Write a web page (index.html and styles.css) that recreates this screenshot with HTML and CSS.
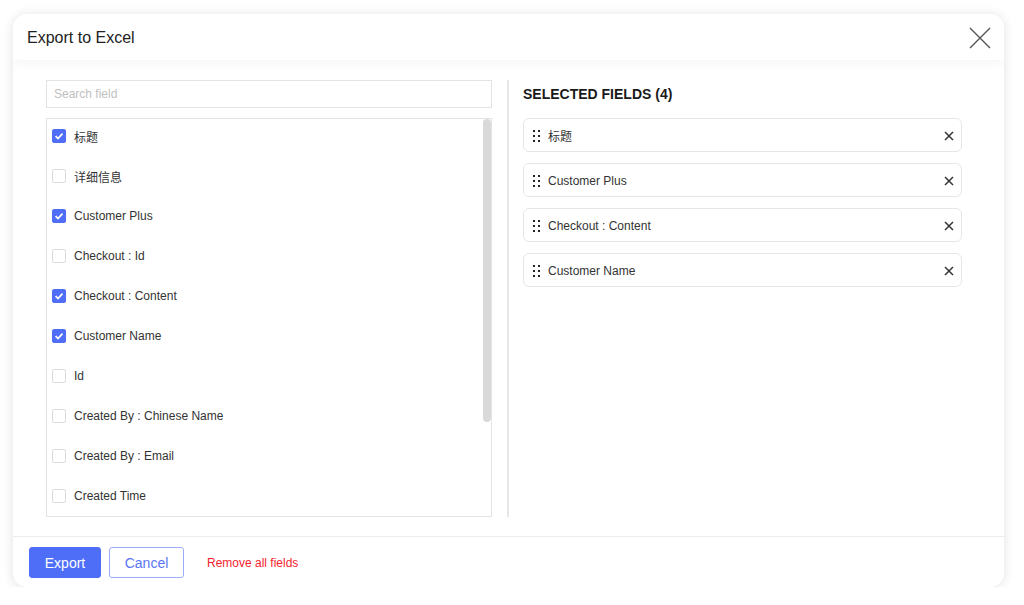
FILE: index.html
```html
<!DOCTYPE html>
<html>
<head>
<meta charset="utf-8">
<link rel="stylesheet" href="styles.css">
</head>
<body>
<div class="modal">
  <div class="header">
    <div class="title">Export to Excel</div>
    <svg class="close" width="22" height="22" viewBox="0 0 22 22"><path d="M1 1 L21 21 M21 1 L1 21" stroke="#555" stroke-width="1.4" fill="none"/></svg>
  </div>
  <div class="body">
    <div class="left">
      <div class="search">Search field</div>
      <div class="list">
        <div class="row"><span class="cb on"><svg width="10" height="10" viewBox="0 0 10 10"><path d="M1.6 5.2 L4 7.5 L8.5 2.6" stroke="#fff" stroke-width="1.8" fill="none"/></svg></span>标题</div>
        <div class="row"><span class="cb"></span>详细信息</div>
        <div class="row"><span class="cb on"><svg width="10" height="10" viewBox="0 0 10 10"><path d="M1.6 5.2 L4 7.5 L8.5 2.6" stroke="#fff" stroke-width="1.8" fill="none"/></svg></span>Customer Plus</div>
        <div class="row"><span class="cb"></span>Checkout : Id</div>
        <div class="row"><span class="cb on"><svg width="10" height="10" viewBox="0 0 10 10"><path d="M1.6 5.2 L4 7.5 L8.5 2.6" stroke="#fff" stroke-width="1.8" fill="none"/></svg></span>Checkout : Content</div>
        <div class="row"><span class="cb on"><svg width="10" height="10" viewBox="0 0 10 10"><path d="M1.6 5.2 L4 7.5 L8.5 2.6" stroke="#fff" stroke-width="1.8" fill="none"/></svg></span>Customer Name</div>
        <div class="row"><span class="cb"></span>Id</div>
        <div class="row"><span class="cb"></span>Created By : Chinese Name</div>
        <div class="row"><span class="cb"></span>Created By : Email</div>
        <div class="row"><span class="cb"></span>Created Time</div>
        <div class="thumb"></div>
      </div>
    </div>
    <div class="divider"></div>
    <div class="right">
      <div class="sel-title">SELECTED FIELDS (4)</div>
      <div class="sel-list">
        <div class="item"><span class="grip"><i></i><i></i><i></i><i></i><i></i><i></i></span><span class="name">标题</span><svg class="x" width="10" height="10" viewBox="0 0 10 10"><path d="M1 1 L9 9 M9 1 L1 9" stroke="#333" stroke-width="1.5"/></svg></div>
        <div class="item"><span class="grip"><i></i><i></i><i></i><i></i><i></i><i></i></span><span class="name">Customer Plus</span><svg class="x" width="10" height="10" viewBox="0 0 10 10"><path d="M1 1 L9 9 M9 1 L1 9" stroke="#333" stroke-width="1.5"/></svg></div>
        <div class="item"><span class="grip"><i></i><i></i><i></i><i></i><i></i><i></i></span><span class="name">Checkout : Content</span><svg class="x" width="10" height="10" viewBox="0 0 10 10"><path d="M1 1 L9 9 M9 1 L1 9" stroke="#333" stroke-width="1.5"/></svg></div>
        <div class="item"><span class="grip"><i></i><i></i><i></i><i></i><i></i><i></i></span><span class="name">Customer Name</span><svg class="x" width="10" height="10" viewBox="0 0 10 10"><path d="M1 1 L9 9 M9 1 L1 9" stroke="#333" stroke-width="1.5"/></svg></div>
      </div>
    </div>
  </div>
  <div class="footer">
    <button class="btn primary">Export</button>
    <button class="btn ghost">Cancel</button>
    <span class="remove">Remove all fields</span>
  </div>
</div>
</body>
</html>
```
FILE: styles.css
```css
* { box-sizing: border-box; }
html, body { margin: 0; padding: 0; background: #fff; }
body {
  font-family: "Liberation Sans", Arial, "Noto Sans CJK SC", sans-serif;
  color: #333;
  padding: 14px 0 0 13px;
}
.modal {
  width: 991px;
  height: 573px;
  background: #fff;
  border-radius: 14px;
  box-shadow: 0 1px 12px rgba(0, 0, 0, 0.12);
  display: flex;
  flex-direction: column;
  overflow: hidden;
}
.header {
  height: 46px;
  flex: none;
  display: flex;
  align-items: center;
  justify-content: space-between;
  padding: 0 13px 0 14px;
  box-shadow: 0 3px 10px rgba(0, 0, 0, 0.045);
  position: relative;
  z-index: 1;
}
.title {
  font-size: 16px;
  color: #222;
  padding-top: 2px;
}
.close { display: block; margin-top: 1px; }
.body {
  flex: 1;
  display: flex;
  padding: 20px 42px 19px 33px;
  min-height: 0;
}
.left {
  width: 446px;
  display: flex;
  flex-direction: column;
  gap: 10px;
}
.search {
  height: 28px;
  border: 1px solid #e3e3e3;
  font-size: 12px;
  color: #bfbfbf;
  padding: 0 7px;
  display: flex;
  align-items: center;
}
.list {
  flex: 1;
  min-height: 0;
  border: 1px solid #e3e3e3;
  overflow: hidden;
  padding: 0 0 0 5px;
  position: relative;
}
.thumb {
  position: absolute;
  top: 0;
  right: 0;
  width: 8px;
  height: 303px;
  background: #d9d9d9;
  border-radius: 4px;
}
.row {
  height: 40px;
  display: flex;
  align-items: center;
  gap: 8px;
  font-size: 12px;
  color: #333;
  padding-bottom: 6px;
}
.cb {
  width: 14px;
  height: 14px;
  border: 1px solid #dcdcdc;
  border-radius: 2px;
  display: flex;
  align-items: center;
  justify-content: center;
  flex: none;
}
.cb.on { background: #4f6ef7; border-color: #4f6ef7; }
.cb svg { display: block; }
.divider {
  width: 2px;
  background: #e6e6e6;
  margin: 0 14px 0 15px;
}
.right {
  flex: 1;
  display: flex;
  flex-direction: column;
  gap: 10px;
}
.sel-title {
  height: 28px;
  display: flex;
  align-items: center;
  font-size: 14px;
  font-weight: bold;
  color: #1a1a1a;
}
.sel-list { display: flex; flex-direction: column; gap: 11px; }
.item {
  height: 34px;
  border: 1px solid #e6e6e6;
  border-radius: 6px;
  display: flex;
  align-items: center;
  padding: 1px 7px 0 9px;
  font-size: 12px;
  color: #333;
}
.grip {
  display: grid;
  grid-template-columns: 2px 2px;
  grid-auto-rows: 2px;
  column-gap: 3px;
  row-gap: 3px;
  margin-right: 8px;
}
.grip i { display: block; width: 2px; height: 2px; background: #222; }
.name { flex: 1; }
.x { display: block; }
.footer {
  height: 51px;
  flex: none;
  border-top: 1px solid #ececec;
  display: flex;
  align-items: center;
  padding: 1px 16px 0 16px;
  gap: 8px;
}
.btn {
  height: 31px;
  font-family: inherit;
  font-size: 14px;
  border-radius: 3px;
  padding: 0;
  cursor: pointer;
}
.btn.primary {
  width: 72px;
  background: #4f6ef7;
  border: 1px solid #4f6ef7;
  color: #fff;
}
.btn.ghost {
  width: 75px;
  background: #fff;
  border: 1px solid #9aabfa;
  color: #5a75f6;
}
.remove {
  margin-left: 15px;
  font-size: 12px;
  color: #f5222d;
}
```
